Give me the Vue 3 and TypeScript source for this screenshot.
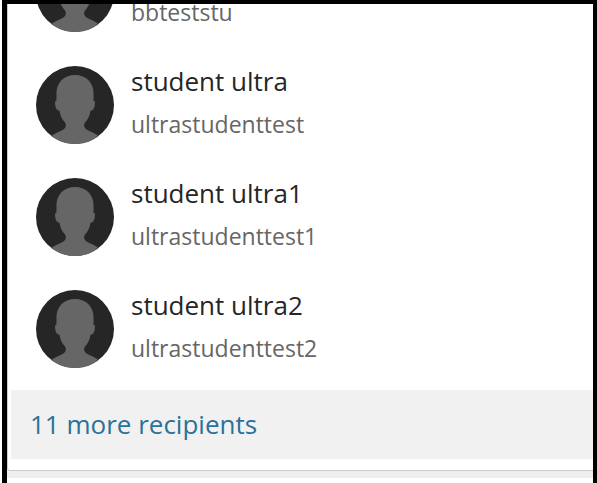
<script setup lang="ts">
interface Recipient {
  id: number
  name: string
  username: string
}

const recipients: Recipient[] = [
  { id: 1, name: '', username: 'bbteststu' },
  { id: 2, name: 'student ultra', username: 'ultrastudenttest' },
  { id: 3, name: 'student ultra1', username: 'ultrastudenttest1' },
  { id: 4, name: 'student ultra2', username: 'ultrastudenttest2' },
]
const remaining = 11
</script>

<template>
  <main class="frame">
    <section class="card">
      <ul class="recipients">
        <li v-for="person in recipients" :key="person.id" class="recipient">
          <svg class="avatar" viewBox="0 0 78 78" aria-hidden="true">
            <circle cx="39" cy="39" r="39" fill="#262626" />
            <path
              fill="#666"
              d="M39 9C27.500 9 20.500 17 20.500 27V34.500C18.800 34.500 18.800 37 19.500 40.500C20.300 43.500 21.500 44.500 23.500 44.800C24.200 50 26 53 29 56.500C30.500 58.500 30 61 28.500 62.500C25 66 20 66 15.500 70.200A39 39 0 0 0 62.500 70.200C58 66 53 66 49.500 62.500C48 61 47.500 58.500 49 56.500C52 53 53.800 50 54.500 44.800C56.500 44.500 57.700 43.500 58.500 40.500C59.200 37 59.200 34.500 57.500 34.500V27C57.500 17 50.500 9 39 9Z"
            />
          </svg>
          <div class="details">
            <span class="name">{{ person.name }}</span>
            <span class="username">{{ person.username }}</span>
          </div>
        </li>
      </ul>
      <button type="button" class="more">{{ remaining }} more recipients</button>
    </section>
    <div class="divider"></div>
  </main>
</template>

<style>
body {
  background: #fff;
}
</style>

<style scoped>
.frame {
  box-sizing: border-box;
  display: flex;
  flex-direction: column;
  height: 100vh;
  margin-left: 2px;
  padding-bottom: 5px;
  overflow: hidden;
  border: solid #000;
  border-width: 4px 4px 0 5px;
  background: #fff;
  font-family: "Open Sans", "Noto Sans", sans-serif;
}

.card {
  box-sizing: border-box;
  display: flex;
  flex: 1;
  flex-direction: column;
  min-height: 0;
  padding: 0 0 11px 3px;
  border: solid #ccc;
  border-width: 0 0 1px 1px;
  border-bottom-left-radius: 3px;
  background: #fff;
}

.recipients {
  display: flex;
  flex: 1;
  flex-direction: column;
  justify-content: flex-end;
  min-height: 0;
  margin: 0;
  padding: 0 0 5px 25px;
  overflow: hidden;
  list-style: none;
}

.recipient {
  display: flex;
  flex: none;
  align-items: center;
  gap: 17px;
  height: 112px;
}

.avatar {
  flex: none;
  width: 78px;
  height: 78px;
}

.details {
  display: flex;
  flex-direction: column;
  padding-bottom: 4px;
}

.name,
.username {
  height: 43px;
  line-height: 43px;
  white-space: nowrap;
}

.name {
  color: #262626;
  font-size: 26px;
}

.username {
  color: #666;
  font-size: 23px;
}

.more {
  flex: none;
  height: 69px;
  margin: 0;
  padding: 0 19px 2px;
  border: 0;
  background: #f1f1f1;
  color: #2a7299;
  font-family: inherit;
  font-size: 26px;
  text-align: left;
  cursor: pointer;
}

.divider {
  flex: none;
  height: 7px;
  background: #eee;
}
</style>
